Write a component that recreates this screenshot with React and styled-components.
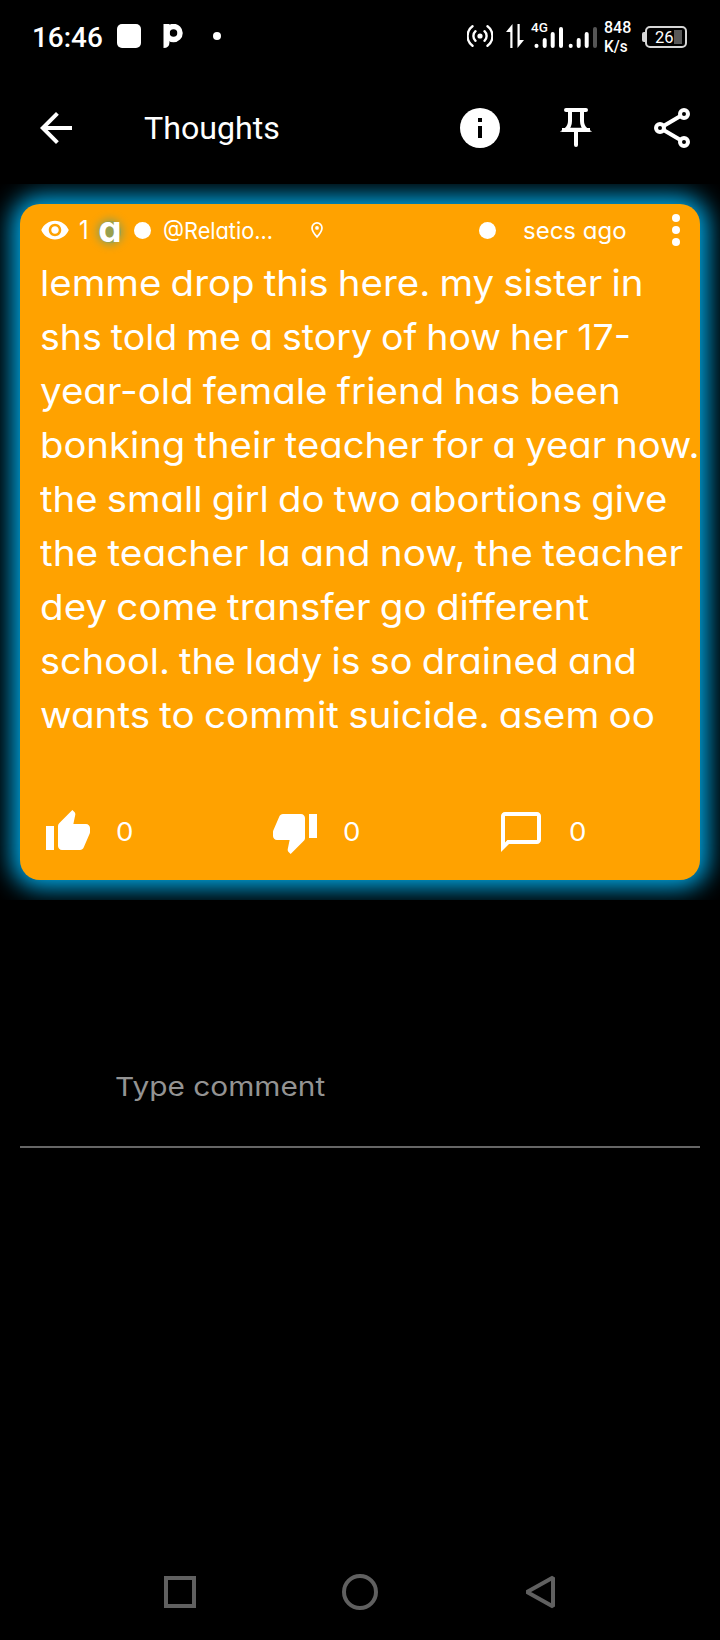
import React, { useLayoutEffect, useRef, useState } from "react";
import styled, { createGlobalStyle } from "styled-components";

const GlobalStyle = createGlobalStyle`
  * { box-sizing: border-box; }
  body { margin: 0; background: #000; }
  svg { display: block; flex: none; }
`;

const Screen = styled.div`
  width: 720px;
  height: 1640px;
  display: flex;
  flex-direction: column;
  background: #000;
  color: #fff;
  font-family: Inter, "Noto Sans", sans-serif;
  font-feature-settings: "cv11";
  overflow: hidden;
`;

const Label = styled.span`
  display: block;
  flex: none;
  width: ${(p) => p.$width}px;
  font-family: ${(p) => (p.$roboto ? "Roboto, sans-serif" : "inherit")};
  font-size: ${(p) => p.$size}px;
  font-weight: ${(p) => p.$weight || 400};
  line-height: ${(p) => p.$line || p.$size}px;
  margin-left: ${(p) => p.$left || 0}px;
  margin-top: ${(p) => p.$top || 0}px;
  color: ${(p) => p.$color || "#fff"};
  white-space: nowrap;
`;

const Stretch = styled.span`
  display: inline-block;
  vertical-align: top;
  transform-origin: left center;
`;

// Widens or narrows the text so that it fills the given width.
function Text({ children, ...rest }) {
  const ref = useRef(null);
  const [scale, setScale] = useState(1);
  useLayoutEffect(() => {
    setScale(rest.$width / ref.current.offsetWidth);
  }, [children, rest.$width]);
  return (
    <Label {...rest}>
      <Stretch ref={ref} style={{ transform: `scaleX(${scale})` }}>{children}</Stretch>
    </Label>
  );
}

const StatusBar = styled.header`
  height: 74px;
  flex: none;
  display: flex;
  align-items: center;
  padding: 0 33px 2px 32px;
`;

const AppSquare = styled.i`
  width: 24px;
  height: 24px;
  margin-left: 14px;
  border-radius: 5px;
  background: #fff;
`;

const Dot = styled.i`
  flex: none;
  width: ${(p) => p.$size}px;
  height: ${(p) => p.$size}px;
  margin-left: ${(p) => p.$left || 0}px;
  border-radius: 50%;
  background: #fff;
`;

const Spacer = styled.div`
  flex: 1;
`;

const StatusIcon = styled.svg`
  margin-left: ${(p) => p.$left || 0}px;
`;

const Signal = styled.div`
  position: relative;
  margin-left: 6px;
`;

const NetworkBadge = styled.span`
  position: absolute;
  left: 1px;
  top: -3px;
  font: 500 13.5px/16px Roboto, sans-serif;
`;

const Speed = styled.div`
  width: 28px;
  margin: 1px 0 0 6px;
  display: flex;
  flex-direction: column;
`;

const Battery = styled.div`
  position: relative;
  width: 42px;
  height: 22px;
  margin: 2px 0 0 13px;
  padding-left: 8px;
  border: 2px solid #d6d6d6;
  border-radius: 5px;
  display: flex;
  align-items: center;
  &::before {
    content: "";
    position: absolute;
    left: -5px;
    top: 4px;
    width: 3px;
    height: 10px;
    border-radius: 2px 0 0 2px;
    background: #d6d6d6;
  }
`;

const BatteryRest = styled.i`
  width: 8px;
  height: 14px;
  background: #585858;
`;

const AppBar = styled.nav`
  height: 110px;
  flex: none;
  display: flex;
  align-items: center;
  padding: 0 24px 2px 32px;
`;

const Actions = styled.div`
  flex: 1;
  display: flex;
  justify-content: flex-end;
  gap: 48px;
`;

const Glow = styled.main`
  height: 716px;
  flex: none;
  padding: 20px;
  overflow: hidden;
`;

const Card = styled.article`
  height: 676px;
  display: flex;
  flex-direction: column;
  border-radius: 20px;
  background: #ffa200;
  box-shadow: 0 0 24px 8px #00a9e6;
`;

const Meta = styled.div`
  height: 52px;
  flex: none;
  display: flex;
  align-items: center;
  padding: 0 19px 0 20px;
`;

const Avatar = styled.div`
  width: 22px;
  height: 22px;
  margin-left: 10px;
  margin-top: 4px;
  border-radius: 50%;
  background: #99a04d;
  box-shadow: 0 0 9px 2px #99a04d;
  display: flex;
  align-items: center;
  justify-content: center;
  font-size: 37px;
  font-weight: 700;
  line-height: 22px;
  padding-bottom: 6px;
`;

const Body = styled.div`
  flex: 1;
  padding-left: 20px;
  word-spacing: -1.5px;
`;

const Reactions = styled.footer`
  height: 72px;
  flex: none;
  display: grid;
  grid-template-columns: repeat(3, 1fr);
`;

const Reaction = styled.div`
  display: flex;
  height: 48px;
  align-items: center;
  padding-left: 24px;
`;

const CommentBox = styled.div`
  height: 112px;
  flex: none;
  margin: 136px 20px 0;
  padding: 31px 0 0 95px;
  border-bottom: 2px solid #666;
`;

const NavBar = styled.footer`
  height: 96px;
  margin-top: auto;
  flex: none;
  display: flex;
  justify-content: center;
  align-items: center;
  gap: 140px;
`;

const story = [
  ["lemme drop this here. my sister in", 603],
  ["shs told me a story of how her 17-", 591],
  ["year-old female friend has been", 581],
  ["bonking their teacher for a year now.", 660],
  ["the small girl do two abortions give", 627],
  ["the teacher la and now, the teacher", 643],
  ["dey come transfer go different", 549],
  ["school. the lady is so drained and", 597],
  ["wants to commit suicide. asem oo", 615],
];

const reactions = [
  "M1 21h4V9H1v12zm22-11c0-1.1-.9-2-2-2h-6.31l.95-4.57.03-.32c0-.41-.17-.79-.44-1.06L14.17 1 7.59 7.59C7.22 7.95 7 8.45 7 9v10c0 1.1.9 2 2 2h9c.83 0 1.54-.5 1.84-1.22l3.02-7.05c.09-.23.14-.47.14-.73v-2z",
  "M15 3H6c-.83 0-1.54.5-1.84 1.22l-3.02 7.05c-.09.23-.14.47-.14.73v2c0 1.1.9 2 2 2h6.31l-.95 4.57-.03.32c0 .41.17.79.44 1.06L9.83 23l6.59-6.59c.36-.36.58-.86.58-1.41V5c0-1.1-.9-2-2-2zm4 0v12h4V3h-4z",
  "M20 2H4c-1.1 0-2 .9-2 2v18l4-4h14c1.1 0 2-.9 2-2V4c0-1.1-.9-2-2-2zm0 14H5.2L4 17.2V4h16v12z",
];

function Status() {
  return (
    <StatusBar>
      <Text $roboto $size={27.5} $weight={500} $line={32} $width={71} $top={3}>16:46</Text>
      <AppSquare />
      <StatusIcon $left={22} width="22" height="24" viewBox="0 0 22 24">
        <path d="M0.5 0h6v18q0 6-6 6z" fill="#fff" />
        <circle cx="10.5" cy="9" r="6.5" fill="none" stroke="#fff" strokeWidth="5.5" />
      </StatusIcon>
      <Dot $size={8} $left={28} />
      <Spacer />
      <StatusIcon width="26" height="24" viewBox="0 0 26 24" fill="none" stroke="#fff" strokeWidth="2.4" strokeLinecap="round">
        <circle cx="13" cy="12" r="2.6" fill="#fff" stroke="none" />
        <path d="M8.5 7.2a6.5 6.5 0 0 0 0 9.6M17.5 7.2a6.5 6.5 0 0 1 0 9.6M5.5 2.3a12 12 0 0 0 0 19.4M20.5 2.3a12 12 0 0 1 0 19.4" />
      </StatusIcon>
      <StatusIcon $left={13} width="18" height="26" viewBox="0 0 18 26" fill="#fff">
        <path d="M6.5 1v24H4.3V9H0zM11.5 25V1h2.2v16H18z" />
      </StatusIcon>
      <Signal>
        <svg width="68" height="28" viewBox="0 0 68 28" fill="none" stroke="#fff" strokeWidth="4" strokeLinecap="round">
          <path d="M6.5 23.7v.4M14.7 18v6M22.7 12v12M31 7v17M40.7 23.7v.4M48.7 18v6M56.7 12v12" />
          <path d="M65 7v17" stroke="#555" />
        </svg>
        <NetworkBadge>4G</NetworkBadge>
      </Signal>
      <Speed>
        <Text $roboto $size={16} $weight={500} $line={19} $width={27}>848</Text>
        <Text $roboto $size={16} $weight={500} $line={19} $width={24}>K/s</Text>
      </Speed>
      <Battery>
        <Text $roboto $size={16.5} $line={18} $width={19} $top={1}>26</Text>
        <BatteryRest />
      </Battery>
    </StatusBar>
  );
}

export default function App() {
  return (
    <Screen>
      <GlobalStyle />
      <Status />
      <AppBar>
        <svg width="48" height="48" viewBox="0 0 24 24" fill="#fff">
          <path d="M20 11H7.83l5.59-5.59L12 4l-8 8 8 8 1.41-1.41L7.83 13H20v-2z" />
        </svg>
        <Text $roboto $size={30.5} $line={36} $width={136} $left={64} $top={2}>Thoughts</Text>
        <Actions>
          <svg width="48" height="48" viewBox="0 0 48 48">
            <circle cx="24" cy="24" r="20" fill="#fff" />
            <path d="M22 14h4v4h-4zM22 22h4v12h-4z" fill="#000" />
          </svg>
          <svg width="48" height="48" viewBox="0 0 48 48" fill="none" stroke="#fff" strokeWidth="4" strokeLinecap="round">
            <path d="M14 6h20M24 28v13" />
            <path d="M18 7v10c0 4.5-1.6 6.8-4.2 8.8h20.4c-2.6-2-4.2-4.3-4.2-8.800V7" strokeLinecap="butt" />
            <path d="M10 26h28" strokeLinecap="butt" />
          </svg>
          <svg width="48" height="48" viewBox="0 0 48 48" fill="none" stroke="#fff" strokeWidth="4">
            <path d="M15.5 22 32.5 12M15.5 26 32.5 36" />
            <circle cx="36" cy="10" r="4" />
            <circle cx="12" cy="24" r="4" />
            <circle cx="36" cy="38" r="4" />
          </svg>
        </Actions>
      </AppBar>
      <Glow>
        <Card>
          <Meta>
            <svg width="30" height="30" viewBox="0 0 24 24" fill="#fff">
              <path d="M12 4.5C7 4.5 2.73 7.61 1 12c1.73 4.39 6 7.5 11 7.5s9.27-3.11 11-7.5c-1.73-4.39-6-7.5-11-7.5zM12 17c-2.76 0-5-2.24-5-5s2.24-5 5-5 5 2.24 5 5-2.24 5-5 5zm0-8c-1.66 0-3 1.34-3 3s1.34 3 3 3 3-1.34 3-3-1.34-3-3-3z" />
            </svg>
            <Text $size={26} $line={30} $width={10} $left={9}>1</Text>
            <Avatar>a</Avatar>
            <Dot $size={17} $left={13} />
            <Text $size={23.5} $line={30} $width={110} $left={12} $top={2}>@Relatio...</Text>
            <StatusIcon $left={37} width="14" height="18" viewBox="0 0 14 18">
              <path d="M7 1.9a5 5 0 0 0-5 5c0 3.4 5 9 5 9s5-5.6 5-9a5 5 0 0 0-5-5z" fill="none" stroke="#fff" strokeWidth="1.7" />
              <circle cx="7" cy="6.9" r="1.9" fill="#fff" />
            </StatusIcon>
            <Spacer />
            <Dot $size={17} />
            <Text $size={24} $line={30} $width={104} $left={27} $top={2}>secs ago</Text>
            <StatusIcon $left={44} width="10" height="32" viewBox="0 0 10 32" fill="#fff">
              <circle cx="5" cy="4" r="4" />
              <circle cx="5" cy="16" r="4" />
              <circle cx="5" cy="28" r="4" />
            </StatusIcon>
          </Meta>
          <Body>
            {story.map(([line, width]) => (
              <Text key={line} $size={36} $line={54} $width={width}>{line}</Text>
            ))}
          </Body>
          <Reactions>
            {reactions.map((path) => (
              <Reaction key={path}>
                <svg width="48" height="48" viewBox="0 0 24 24" fill="#fff"><path d={path} /></svg>
                <Text $size={26} $line={32} $width={17} $left={24}>0</Text>
              </Reaction>
            ))}
          </Reactions>
        </Card>
      </Glow>
      <CommentBox>
        <Text $size={26} $line={40} $width={210} $color="#939393">Type comment</Text>
      </CommentBox>
      <NavBar>
        <svg width="40" height="40" viewBox="0 0 40 40" fill="none" stroke="#606060" strokeWidth="4">
          <path d="M6 6h28v28H6z" />
        </svg>
        <svg width="40" height="40" viewBox="0 0 40 40" fill="none" stroke="#606060" strokeWidth="4">
          <circle cx="20" cy="20" r="16" />
        </svg>
        <svg width="40" height="40" viewBox="0 0 40 40" fill="none" stroke="#606060" strokeWidth="4" strokeLinejoin="bevel">
          <path d="M33 5.5v29L7 20z" />
        </svg>
      </NavBar>
    </Screen>
  );
}
